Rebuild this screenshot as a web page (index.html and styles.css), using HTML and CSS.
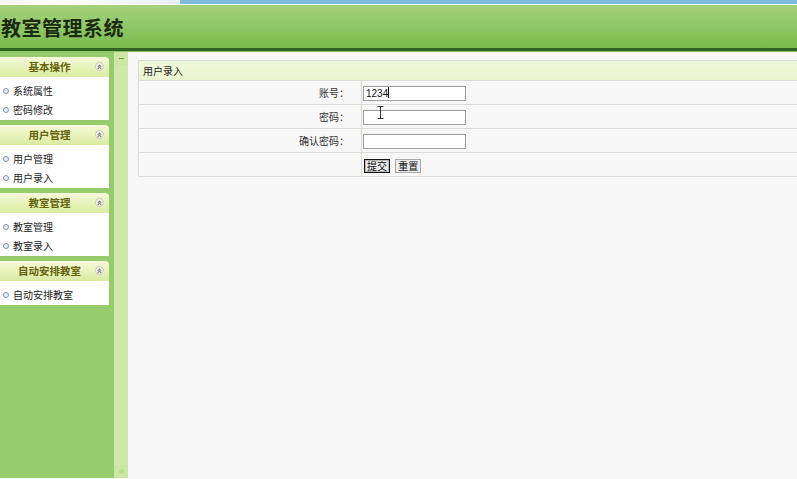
FILE: index.html
```html
<!DOCTYPE html>
<html lang="zh-CN">
<head>
  <meta charset="UTF-8">
  <title>教室管理系统</title>
  <link rel="stylesheet" href="styles.css">
</head>
<body>

  <!-- browser tab strip -->
  <div class="topstrip"><div class="tab"></div></div>

  <!-- Header -->
  <div class="header">
    <h1>教室管理系统</h1>
  </div>

  <div class="layout">

    <!-- Left menu -->
    <div class="sidebar">
      <div class="menu-box">
        <div class="menu-title">基本操作<span class="fold"></span></div>
        <ul class="menu-list">
          <li>系统属性</li>
          <li>密码修改</li>
        </ul>
      </div>
      <div class="menu-box">
        <div class="menu-title">用户管理<span class="fold"></span></div>
        <ul class="menu-list">
          <li>用户管理</li>
          <li>用户录入</li>
        </ul>
      </div>
      <div class="menu-box">
        <div class="menu-title">教室管理<span class="fold"></span></div>
        <ul class="menu-list">
          <li>教室管理</li>
          <li>教室录入</li>
        </ul>
      </div>
      <div class="menu-box">
        <div class="menu-title">自动安排教室<span class="fold"></span></div>
        <ul class="menu-list">
          <li>自动安排教室</li>
        </ul>
      </div>
    </div>

    <!-- Splitter -->
    <div class="splitter">
      <div class="split-btn"><span class="dash"></span></div>
      <div class="split-fill"></div>
      <div class="split-btn"><span class="dot"></span></div>
    </div>

    <!-- Main -->
    <div class="content">
      <table class="form-table">
        <tr>
          <td class="caption" colspan="2">用户录入</td>
        </tr>
        <tr>
          <td class="label">账号：</td>
          <td class="field">
            <span class="input-wrap">
              <input class="text-input" type="text" value="1234">
              <span class="caret"></span>
            </span>
          </td>
        </tr>
        <tr>
          <td class="label">密码：</td>
          <td class="field">
            <span class="input-wrap">
              <input class="text-input" type="password">
              <svg class="ibeam" width="7" height="13" viewBox="0 0 7 13">
                <path d="M0.5 0.5h6M3.5 0.5v12M0.5 12.5h6" stroke="#333" stroke-width="1" fill="none"/>
              </svg>
            </span>
          </td>
        </tr>
        <tr>
          <td class="label">确认密码：</td>
          <td class="field"><input class="text-input" type="password"></td>
        </tr>
        <tr>
          <td class="label"></td>
          <td class="field">
            <button class="btn btn-default">提交</button>
            <button class="btn">重置</button>
          </td>
        </tr>
      </table>
    </div>

  </div>

</body>
</html>
```

FILE: styles.css
```css
body {
  margin: 0;
  height: 479px;
  overflow: hidden;
  background: #f7f7f7;
  font-family: "Liberation Sans", "Noto Sans CJK SC", sans-serif;
  font-size: 10px;
  color: #222;
}

/* Tab strip */
.topstrip {
  height: 4px;
  background: #80b9d9;
  border-bottom: 1px solid #ffffff;
}

.topstrip .tab {
  width: 180px;
  height: 4px;
  background: linear-gradient(to right, #f4f4f4, #ffffff 30%, #e8eef2);
}

/* Header */
.header {
  height: 43px;
  background: linear-gradient(to bottom, #a5d17c, #8fc867 50%, #79b94b);
  border-bottom: 3px solid #2e641f;
  box-shadow: 0 1px 0 #8fc26d;
}

.header h1 {
  margin: 0;
  padding-left: 1px;
  line-height: 45px;
  font-family: "Noto Sans CJK SC", sans-serif;
  font-size: 20px;
  font-weight: bold;
  letter-spacing: 0.5px;
  color: #1b2a12;
}

/* Layout */
.layout {
  display: flex;
  height: 426px;
  margin-top: 1px;
  overflow: hidden;
}

/* Sidebar */
.sidebar {
  width: 114px;
  flex-shrink: 0;
  background: #96cc6c;
  padding-top: 5px;
  box-sizing: border-box;
}

.menu-box {
  width: 109px;
  margin-bottom: 5px;
}

.menu-title {
  position: relative;
  height: 20px;
  line-height: 20px;
  padding-right: 10px;
  text-align: center;
  font-family: "Noto Sans CJK SC", sans-serif;
  font-size: 10.5px;
  font-weight: bold;
  color: #66640e;
  background: linear-gradient(to bottom, #f7fadb, #e6f1b6 60%, #d9eba2);
  border-radius: 0 4px 0 0;
}

.fold {
  position: absolute;
  right: 5px;
  top: 5px;
  width: 9px;
  height: 9px;
  border-radius: 50%;
  background: #f6f6f2;
  border: 1px solid #c9cbb4;
  box-sizing: border-box;
}

.fold::before,
.fold::after {
  content: "";
  position: absolute;
  left: 2px;
  width: 2px;
  height: 2px;
  border-left: 1px solid #777;
  border-top: 1px solid #777;
  transform: rotate(45deg);
}

.fold::before { top: 1.5px; }
.fold::after { top: 4px; }

.menu-list {
  list-style: none;
  margin: 0;
  padding: 4px 0 1px;
  background: #ffffff;
}

.menu-list li {
  position: relative;
  height: 19px;
  line-height: 19px;
  padding-left: 13px;
  font-family: "Noto Sans CJK SC", sans-serif;
  font-size: 10px;
  color: #222;
}

.menu-list li::before {
  content: "";
  position: absolute;
  left: 3px;
  top: 7px;
  width: 4px;
  height: 4px;
  border: 1px solid #8094a8;
  border-radius: 50%;
  background: #e8eef4;
}

/* Splitter */
.splitter {
  width: 14px;
  flex-shrink: 0;
  display: flex;
  flex-direction: column;
  background: #d0e8ac;
}

.split-fill {
  flex: 1;
  background: #d0e8ac;
}

.split-btn {
  flex: 0 0 13px;
  display: flex;
  align-items: center;
  justify-content: center;
  background: #cce6a6;
}

.split-btn .dash {
  width: 5px;
  height: 1px;
  background: #6a9a4a;
}

.split-btn .dot {
  width: 5px;
  height: 5px;
  border-radius: 50%;
  background: #b7dc8e;
}

/* Main content */
.content {
  flex: 1;
  min-width: 0;
  padding: 8px 0 0 10px;
  background: #f7f7f7;
}

.form-table {
  width: calc(100% + 10px);
  border-collapse: collapse;
  font-family: "Noto Sans CJK SC", sans-serif;
  font-size: 10px;
}

.form-table td {
  border: 1px solid #dcdcd6;
  padding: 0;
}

.caption {
  height: 19px;
  padding-left: 4px !important;
  background: linear-gradient(to bottom, #f1f8dc, #e9f5cd);
  color: #222;
}

.label {
  width: 210px;
  height: 23px;
  padding-right: 12px !important;
  text-align: right;
  color: #333;
  background: #f7f7f7;
}

.field {
  padding-left: 1px !important;
  background: #f7f7f7;
}

.input-wrap {
  position: relative;
  display: inline-block;
  vertical-align: middle;
}

.text-input {
  width: 103px;
  height: 15px;
  box-sizing: border-box;
  margin: 0;
  padding: 0 2px;
  border: 1px solid #9c9c9c;
  background: #ffffff;
  font-family: "Liberation Sans", sans-serif;
  font-size: 10px;
  color: #111;
  vertical-align: middle;
}

.caret {
  position: absolute;
  left: 25px;
  top: 2px;
  width: 1px;
  height: 11px;
  background: #111;
}

.ibeam {
  position: absolute;
  left: 14px;
  top: -3px;
}

.btn {
  height: 14px;
  padding: 0 2px;
  margin: 0 2px 0 1px;
  border: 1px solid #a8a8a8;
  background: #ececec;
  font-family: "Noto Sans CJK SC", sans-serif;
  font-size: 10px;
  line-height: 12px;
  color: #111;
  vertical-align: middle;
}

.btn-default {
  border: 1px solid #111;
  box-shadow: inset 0 0 0 1px #b8b8b8;
}
```
